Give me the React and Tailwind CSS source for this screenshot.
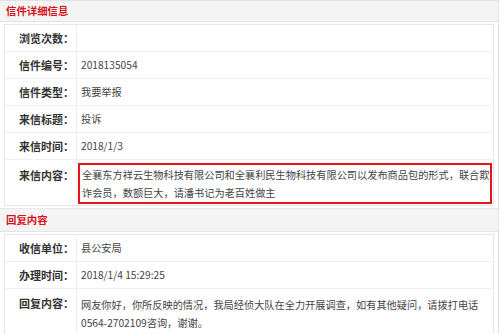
import React from 'react';

const letterRows = [
    { label: '浏览次数：', value: '' },
    { label: '信件编号：', value: '2018135054' },
    { label: '信件类型：', value: '我要举报' },
    { label: '来信标题：', value: '投诉' },
    { label: '来信时间：', value: '2018/1/3' },
];

const replyRows = [
    { label: '收信单位：', value: '县公安局' },
    { label: '办理时间：', value: '2018/1/4 15:29:25' },
];

const Row = ({ label, value }) => (
    <div className="flex h-[27px] border-b border-[#efefef]">
        <div className="w-[72px] shrink-0 flex items-center justify-end pr-[2px] text-[11px] font-bold text-[#333] border-r border-[#efefef]">
            {label}
        </div>
        <div className="flex-1 flex items-center pl-[4px] text-[#444]">{value}</div>
    </div>
);

const SectionTitle = ({ children, className }) => (
    <div className={`bg-[#f4f4f4] border-b border-[#e4e4e4] pl-[6px] flex items-center text-[10.4px] font-bold text-[#d8151c] ${className}`}>
        {children}
    </div>
);

const App = () => {
    return (
        <div
            className="w-[500px] h-[334px] bg-white overflow-hidden text-[10.2px] leading-[18px]"
            style={{ fontFamily: '"Microsoft YaHei", "Noto Sans CJK SC", sans-serif' }}
        >
            <div className="w-[499px] border-t border-r border-[#e2e2e2] h-full">
                <SectionTitle className="h-[21px]">信件详细信息</SectionTitle>

                <div className="px-[4px] pt-[2px] pb-[2px] border-b border-[#e8e8e8]">
                    <div className="border border-[#e6e6e6] border-b-0">
                        {letterRows.map((row, index) => (
                            <Row key={index} label={row.label} value={row.value} />
                        ))}
                        <div className="flex h-[46px] border-b border-[#e6e6e6]">
                            <div className="w-[72px] shrink-0 flex justify-end pt-[6px] pr-[2px] text-[11px] font-bold text-[#333] border-r border-[#efefef]">
                                来信内容：
                            </div>
                            <div className="flex-1 pl-[1px] pr-[1px] pt-[3px]">
                                <div className="border-2 border-[#e8141b] h-[41px] pl-[2px] pt-[1px] text-[#444]">
                                    全襄东方祥云生物科技有限公司和全襄利民生物科技有限公司以发布商品包的形式，联合欺诈会员，数额巨大，请潘书记为老百姓做主
                                </div>
                            </div>
                        </div>
                    </div>
                </div>

                <SectionTitle className="h-[23px]">回复内容</SectionTitle>

                <div className="px-[4px] pt-[2px]">
                    <div className="border border-[#e6e6e6]">
                        {replyRows.map((row, index) => (
                            <Row key={index} label={row.label} value={row.value} />
                        ))}
                        <div className="flex h-[45px]">
                            <div className="w-[72px] shrink-0 flex justify-end pt-[5px] pr-[2px] text-[11px] font-bold text-[#333] border-r border-[#efefef]">
                                回复内容：
                            </div>
                            <div className="flex-1 pl-[4px] pr-[14px] pt-[7px] text-[#444]">
                                网友你好，你所反映的情况，我局经侦大队在全力开展调查，如有其他疑问，请拨打电话0564-2702109咨询，谢谢。
                            </div>
                        </div>
                    </div>
                </div>
            </div>
        </div>
    );
};

export default App;
